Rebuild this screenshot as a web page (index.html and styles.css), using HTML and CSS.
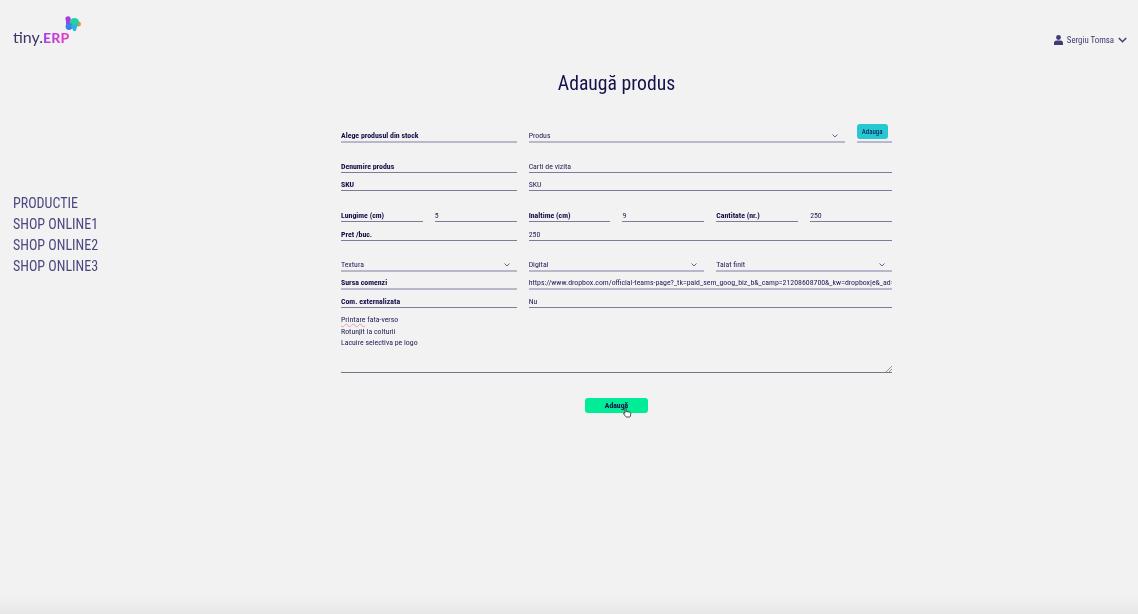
FILE: index.html
```html
<!DOCTYPE html>
<html lang="ro">
<head>
<meta charset="utf-8">
<title>Adaugă produs</title>
<link rel="stylesheet" href="styles.css">
</head>
<body>
<div class="page">
  <header class="topbar">
    <div class="logo">
      <span class="logo-text">tiny.<b class="logo-erp">ERP</b></span>
      <svg class="logo-mark" width="16" height="18" viewBox="0 0 16 18">
        <circle cx="3" cy="2.800" r="2.600" fill="#a63fe0"/>
        <rect x="1" y="2.500" width="4.500" height="6" fill="#a63fe0"/>
        <circle cx="13.400" cy="8" r="2.500" fill="#f58a3c"/>
        <circle cx="9.500" cy="6.500" r="4.600" fill="#22d0a8"/>
        <circle cx="4" cy="10.500" r="3.400" fill="#3d7ee8"/>
        <path d="M5 9 L12.500 8.500 L11 14.500 Q8.500 16.500 7.500 13 Z" fill="#2eb3d8"/>
      </svg>
    </div>
    <div class="user">
      <svg class="user-icon" width="9" height="10" viewBox="0 0 9 10"><circle cx="4.500" cy="2.500" r="2.400" fill="#3f3b73"/><path d="M0 10V8a2.600 2.600 0 0 1 2.600-2.600h3.800A2.600 2.600 0 0 1 9 8v2z" fill="#3f3b73"/></svg>
      <span class="user-name">Sergiu Tomsa</span>
      <svg class="user-caret" width="9" height="6" viewBox="0 0 9 6"><path d="M.8 1l3.700 3.700L8.200 1" fill="none" stroke="#3f3b73" stroke-width="1.500"/></svg>
    </div>
  </header>
  <div class="content">
    <nav class="sidebar">
      <a class="nav-item">PRODUCTIE</a>
      <a class="nav-item">SHOP ONLINE1</a>
      <a class="nav-item">SHOP ONLINE2</a>
      <a class="nav-item">SHOP ONLINE3</a>
    </nav>
    <main class="main">
      <h1 class="title">Adaugă produs</h1>
      <form class="form">
        <div class="row row-first">
          <div class="field light w-third strong">Alege produsul din stock</div>
          <div class="field light select w-product"><span>Produs</span><svg class="chev" width="6" height="4" viewBox="0 0 6 4"><path d="M.5.5L3 3 5.500.5" fill="none" stroke="#3f3b73" stroke-width=".8"/></svg></div>
          <div class="btn-cell"><button type="button" class="btn-small">Adauga</button></div>
        </div>
        <div class="row gap-m">
          <div class="field w-third strong">Denumire produs</div>
          <div class="field w-wide">Carti de vizita</div>
        </div>
        <div class="row">
          <div class="field w-third strong">SKU</div>
          <div class="field w-wide">SKU</div>
        </div>
        <div class="row gap-l">
          <div class="field w-half strong">Lungime (cm)</div>
          <div class="field w-half">5</div>
          <div class="field w-half strong">Inaltime (cm)</div>
          <div class="field w-half">9</div>
          <div class="field w-half strong">Cantitate (nr.)</div>
          <div class="field w-half">250</div>
        </div>
        <div class="row gap-s">
          <div class="field w-third strong">Pret /buc.</div>
          <div class="field w-wide">250</div>
        </div>
        <div class="row gap-l">
          <div class="field light select w-third"><span>Textura</span><svg class="chev" width="6" height="4" viewBox="0 0 6 4"><path d="M.5.5L3 3 5.500.5" fill="none" stroke="#3f3b73" stroke-width=".8"/></svg></div>
          <div class="field light select w-third"><span>Digital</span><svg class="chev" width="6" height="4" viewBox="0 0 6 4"><path d="M.5.5L3 3 5.500.5" fill="none" stroke="#3f3b73" stroke-width=".8"/></svg></div>
          <div class="field light select w-third"><span>Taiat finit</span><svg class="chev" width="6" height="4" viewBox="0 0 6 4"><path d="M.5.5L3 3 5.500.5" fill="none" stroke="#3f3b73" stroke-width=".8"/></svg></div>
        </div>
        <div class="row">
          <div class="field light w-third strong">Sursa comenzi</div>
          <div class="field light w-wide clip">https://www.dropbox.com/official-teams-page?_tk=paid_sem_goog_biz_b&amp;_camp=21208608700&amp;_kw=dropbox|e&amp;_ad=</div>
        </div>
        <div class="row">
          <div class="field w-third strong">Com. externalizata</div>
          <div class="field w-wide">Nu</div>
        </div>
        <div class="notes">
          <div><span class="misspelled">Printare</span> fata-verso</div>
          <div>Rotunjit la colturii</div>
          <div>Lacuire selectiva pe logo</div>
          <svg class="grip" width="6" height="6" viewBox="0 0 6 6"><path d="M0 6L6 0M3 6L6 3" stroke="#777" stroke-width=".8"/></svg>
        </div>
        <div class="actions">
          <button type="button" class="btn-main">Adaugă</button>
          <svg class="cursor" width="9" height="11" viewBox="0 0 9 11"><path d="M2.200 1c.6 0 .9.4.9 1v2.400l3.400.8c.9.2 1.500.8 1.300 1.700l-.4 2.200c-.1.6-.5.9-1 .9H3.600c-.4 0-.7-.2-1-.5L.6 6.700c-.4-.5.2-1.200.8-.8l.6.5V2c0-.6-.4-1 .2-1z" fill="#fff" stroke="#222" stroke-width=".8"/></svg>
        </div>
      </form>
    </main>
  </div>
  <div class="bottom-fade"></div>
</div>
</body>
</html>
```
FILE: styles.css
```css
* { box-sizing: border-box; }
html, body { margin: 0; height: 100%; }
body {
  background: #f2f2f2;
  font-family: Roboto, "Liberation Sans", sans-serif;
  font-stretch: condensed;
  color: #0f0b45;
  overflow: hidden;
}
.page { position: relative; height: 614px; filter: blur(.3px); background: #f2f2f2; }
.topbar { display: flex; justify-content: space-between; padding: 16px 11px 0 13px; height: 68px; }
.logo { position: relative; width: 70px; height: 32px; }
.logo-text {
  position: absolute; left: 0; top: 10px;
  font-family: Lato, sans-serif; font-size: 16px; line-height: 22px; color: #3a3668; font-stretch: normal; white-space: nowrap;
}
.logo-erp {
  font-weight: 900; font-size: 14px; letter-spacing: .2px;
  background: linear-gradient(90deg, #a63fe8, #f03fc8);
  -webkit-background-clip: text; background-clip: text; color: transparent;
}
.logo-mark { position: absolute; left: 52px; top: 0; }
.user { display: flex; align-items: center; height: 16px; margin-top: 16px; gap: 4px; font-size: 8.800px; color: #3f3b73; }
.content { display: flex; }
.sidebar { width: 341px; padding: 125px 0 0 13px; display: flex; flex-direction: column; flex: none; }
.nav-item { font-size: 14px; line-height: 21px; color: #4b4880; }
.main { width: 551px; flex: none; }
.title { margin: 0; padding-top: 1px; font-size: 19.700px; line-height: 30px; font-weight: 400; text-align: center; height: 42px; color: #15114c; }
.form { display: flex; flex-direction: column; font-size: 7.830px; }
.row { display: flex; gap: 12px; }
.row-first { height: 33px; align-items: flex-end; }
.gap-m { margin-top: 12px; }
.gap-l { margin-top: 13px; }
.gap-s { margin-top: 1px; }
.field {
  height: 18px; line-height: 15px; padding-top: 3.500px; border-bottom: 1px solid #7d7a9c; color: #1f1b55; white-space: nowrap;
}
.field.light { border-bottom: 2px solid #b9b7cb; padding-top: 3px; }
.strong { font-weight: 700; color: #0f0b45; }
.w-third { width: calc((100% - 24px) / 3); flex: none; }
.w-wide { flex: 1; }
.w-half { flex: 1; }
.w-product { width: 316px; flex: none; }
.field.select { display: flex; justify-content: space-between; align-items: center; padding: 5.500px 7px 0 0; }
.clip { overflow: hidden; min-width: 0; }
.btn-cell { flex: 1; height: 19px; border-bottom: 2px solid #b9b7cb; }
.btn-small { display: block; width: 31px; height: 15px; padding: 0; border: 0; border-radius: 3px; background: #25c8d2; font: inherit; font-size: 7px; color: #0f0b45; }
.notes { position: relative; height: 65px; border-bottom: 1px solid #77758a; padding-top: 6px; line-height: 11.700px; color: #1f1b55; }
.misspelled { text-decoration: underline wavy #eda0a0 .4px; }
.grip { position: absolute; right: 0; bottom: 0; }
.actions { position: relative; display: flex; justify-content: center; margin-top: 25px; }
.btn-main { width: 63px; height: 15px; padding: 0; border: 0; border-radius: 3px; background: #00ec97; font: inherit; font-size: 7.700px; font-weight: 700; color: #0f0b45; }
.cursor { position: absolute; left: 282px; top: 9px; }
.bottom-fade { position: absolute; left: 0; right: 0; bottom: 0; height: 18px; background: linear-gradient(#f2f2f2, #e7e7e7); }
```
